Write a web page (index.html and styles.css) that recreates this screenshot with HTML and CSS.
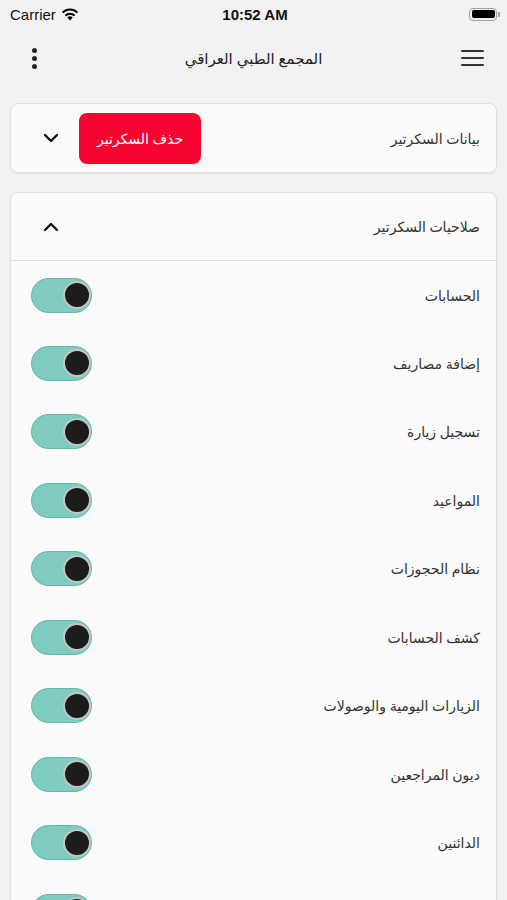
FILE: index.html
```html
<!DOCTYPE html>
<html lang="ar">
<head>
<meta charset="utf-8">
<link rel="stylesheet" href="styles.css">
</head>
<body>
<div class="statusbar">
  <div class="sb-left">Carrier
    <svg class="wifi" width="18" height="13" viewBox="0 0 18 13"><path d="M9 12.5 L6.3 9.6 A3.8 3.8 0 0 1 11.7 9.6 Z" fill="#000"/><path d="M4.4 7.6 A6.6 6.6 0 0 1 13.6 7.6" stroke="#000" stroke-width="2" fill="none"/><path d="M1.6 4.6 A10.4 10.4 0 0 1 16.4 4.6" stroke="#000" stroke-width="2" fill="none"/></svg>
  </div>
  <div class="sb-time">10:52 AM</div>
  <div class="sb-right"><span class="battery"><span class="battery-fill"></span></span><span class="battery-tip"></span></div>
</div>
<div class="navbar">
  <div class="nav-left"><div class="kebab"><span></span><span></span><span></span></div></div>
  <div class="title">المجمع الطبي العراقي</div>
  <div class="nav-right"><div class="hamburger"><span></span><span></span><span></span></div></div>
</div>
<div class="content" dir="rtl">
  <div class="card card-info">
    <div class="card-title">بيانات السكرتير</div>
    <div class="card-actions">
      <button class="btn-delete">حذف السكرتير</button>
      <svg class="chev" width="16" height="10" viewBox="0 0 16 10"><path d="M2 2 L8 8 L14 2" stroke="#111" stroke-width="2.4" fill="none" stroke-linecap="round" stroke-linejoin="round"/></svg>
    </div>
  </div>
  <div class="card card-perms">
    <div class="perm-header">
      <div class="card-title">صلاحيات السكرتير</div>
      <svg class="chev" width="16" height="10" viewBox="0 0 16 10"><path d="M2 8 L8 2 L14 8" stroke="#111" stroke-width="2.4" fill="none" stroke-linecap="round" stroke-linejoin="round"/></svg>
    </div>
    <div class="perm-list">
      <div class="perm-row"><span>الحسابات</span><span class="toggle"><span class="knob"></span></span></div>
      <div class="perm-row"><span>إضافة مصاريف</span><span class="toggle"><span class="knob"></span></span></div>
      <div class="perm-row"><span>تسجيل زيارة</span><span class="toggle"><span class="knob"></span></span></div>
      <div class="perm-row"><span>المواعيد</span><span class="toggle"><span class="knob"></span></span></div>
      <div class="perm-row"><span>نظام الحجوزات</span><span class="toggle"><span class="knob"></span></span></div>
      <div class="perm-row"><span>كشف الحسابات</span><span class="toggle"><span class="knob"></span></span></div>
      <div class="perm-row"><span>الزيارات اليومية والوصولات</span><span class="toggle"><span class="knob"></span></span></div>
      <div class="perm-row"><span>ديون المراجعين</span><span class="toggle"><span class="knob"></span></span></div>
      <div class="perm-row"><span>الدائنين</span><span class="toggle"><span class="knob"></span></span></div>
      <div class="perm-row"><span></span><span class="toggle"><span class="knob"></span></span></div>
    </div>
  </div>
</div>
</body>
</html>
```

FILE: styles.css
```css
* { box-sizing: border-box; }
html, body { margin: 0; padding: 0; }
body {
  width: 507px;
  height: 900px;
  overflow: hidden;
  background: #f2f2f2;
  font-family: "Noto Sans", "DejaVu Sans", sans-serif;
  color: #222;
}
.statusbar {
  height: 28px;
  display: flex;
  align-items: center;
  justify-content: space-between;
  padding: 0 7px 0 10px;
  font-family: "Liberation Sans", Arial, sans-serif;
  font-size: 15px;
  color: #111;
}
.sb-left { display: flex; align-items: center; gap: 5px; width: 120px; }
.sb-time { font-weight: bold; font-size: 15px; }
.sb-right { width: 120px; display: flex; justify-content: flex-end; align-items: center; }
.battery {
  width: 28px; height: 13px;
  border: 1.5px solid #a0a0a0;
  border-radius: 4px;
  padding: 1.5px;
  display: flex;
}
.battery-fill { flex: 1; background: #000; border-radius: 2px; }
.battery-tip { width: 2px; height: 5px; background: #a0a0a0; border-radius: 0 1px 1px 0; margin-left: 1px; }
.navbar {
  height: 64px;
  display: grid;
  grid-template-columns: 1fr auto 1fr;
  align-items: center;
  padding: 0 23px 4px 23px;
}
.nav-left { display: flex; justify-content: flex-start; padding-left: 9px; }
.nav-right { display: flex; justify-content: flex-end; }
.title { font-size: 15px; color: #222; }
.kebab { display: flex; flex-direction: column; gap: 3px; }
.kebab span { width: 5px; height: 5px; border-radius: 50%; background: #222; }
.hamburger { display: flex; flex-direction: column; gap: 4.5px; }
.hamburger span { width: 23px; height: 2.5px; background: #333; border-radius: 1px; }
.content {
  padding: 11px 10px 0 10px;
  display: flex;
  flex-direction: column;
  gap: 19px;
}
.card {
  background: #fafafa;
  border: 1px solid #e0e0e0;
  border-radius: 8px;
  box-shadow: 0 1px 2px rgba(0,0,0,0.06);
}
.card-info {
  height: 70px;
  display: flex;
  align-items: center;
  justify-content: space-between;
  padding: 0 16px 0 32px;
}
.card-title { font-size: 14px; color: #333; }
.card-actions { display: flex; align-items: center; gap: 20px; }
.btn-delete {
  font-family: inherit;
  width: 122px;
  height: 51px;
  border: none;
  border-radius: 8px;
  background: #f5052f;
  color: #fff;
  font-size: 14px;
}
.chev { display: block; }
.perm-header {
  height: 68px;
  display: flex;
  align-items: center;
  justify-content: space-between;
  padding: 0 16px 0 32px;
  border-bottom: 1px solid #dcdcdc;
}
.perm-row {
  height: 68.5px;
  display: flex;
  align-items: center;
  justify-content: space-between;
  padding: 0 16px 0 20px;
  font-size: 14px;
  color: #333;
}
.perm-row:first-child { height: 68px; }
.toggle {
  width: 61px;
  height: 35px;
  border-radius: 18px;
  background: #7fcbbf;
  border: 1.5px solid #5fb9aa;
  display: flex;
  align-items: center;
  padding-left: 4px;
}
.knob {
  width: 28px;
  height: 28px;
  border-radius: 50%;
  background: #1c1c1c;
  border: 2px solid #c4c4c4;
}
```
